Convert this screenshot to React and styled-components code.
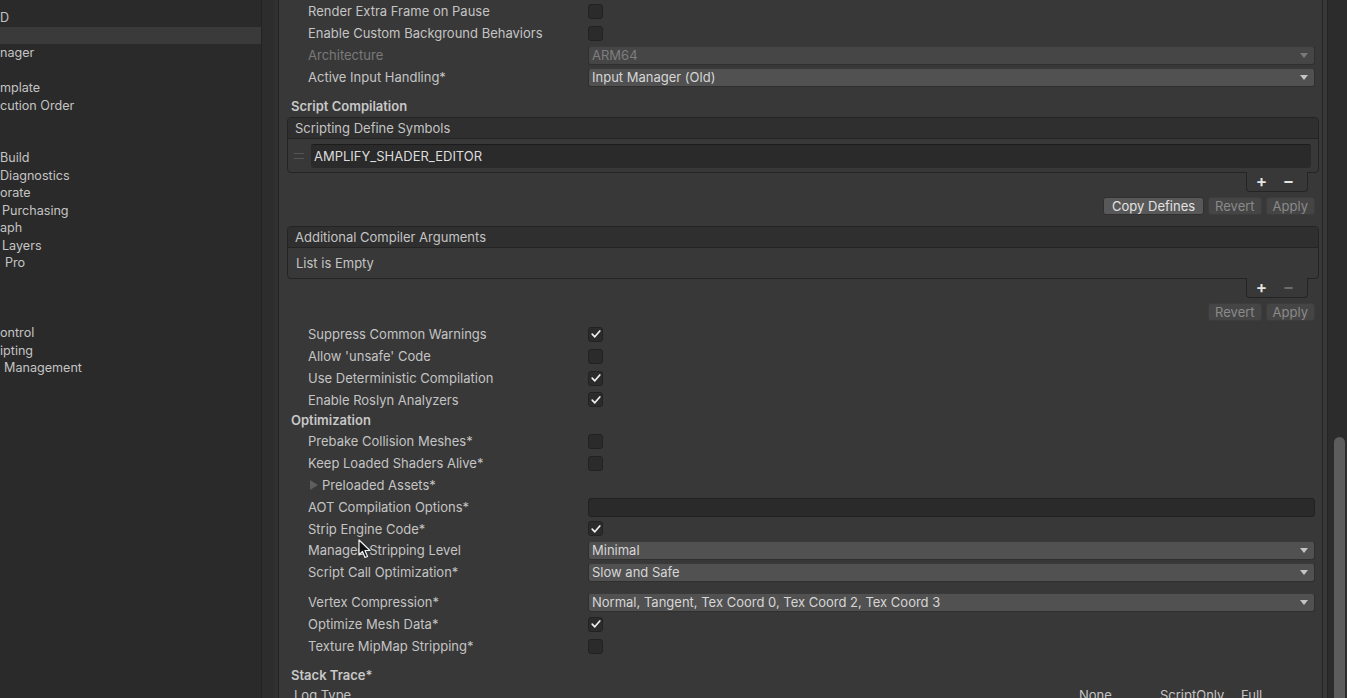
import styled, { createGlobalStyle } from "styled-components";

const GlobalStyle = createGlobalStyle`
    html, body {
        margin: 0;
        padding: 0;
        background: #383838;
        overflow: hidden;
    }
    body {
        font-family: Inter, "Noto Sans", "Liberation Sans", sans-serif;
        font-size: 13px;
        color: #c4c4c4;
    }
`;

const Window = styled.div`
    display: flex;
    width: 100vw;
    height: 698px;
    overflow: hidden;
`;

const Sidebar = styled.div`
    width: 261px;
    flex-shrink: 0;
    background: #2a2a2a;
    padding-top: 9px;
    display: flex;
    flex-direction: column;
`;

const SideItem = styled.div`
    height: 17.5px;
    line-height: 17.5px;
    font-size: 12.6px;
    padding-left: ${({ $indent }) => $indent || 0}px;
    white-space: pre;
    color: #c4c4c4;
    background: ${({ $selected }) => ($selected ? "#3a3a3a" : "transparent")};
`;

const Splitter = styled.div`
    width: 16px;
    flex-shrink: 0;
    background: #2d2d2d;
    border-left: 1px solid #232323;
    border-right: 1px solid #232323;
    box-shadow: inset -4px 0 0 #303030;
    margin-right: 4px;
`;

const Main = styled.div`
    flex: 1;
    position: relative;
    background: #383838;
    padding: 0 7px 0 8px;
    overflow: hidden;
`;

const ScrollArea = styled.div`
    width: 24px;
    flex-shrink: 0;
    display: flex;
    background: #383838;
    border-left: 1px solid #242424;
`;

const ScrollTrack = styled.div`
    flex: 1;
    margin-left: 4px;
    background: #2c2c2c;
    border-left: 1px solid #242424;
    padding-top: 437px;
    padding-left: 6px;
`;

const ScrollThumb = styled.div`
    width: 11px;
    height: 300px;
    border-radius: 6px;
    background: #5c5c5c;
`;

const Header = styled.div`
    height: 20px;
    line-height: 20px;
    margin-top: ${({ $top }) => $top || 0}px;
    font-weight: 600;
    font-size: 13px;
    color: #c8c8c8;
`;

const Row = styled.div`
    display: grid;
    grid-template-columns: 280px 1fr;
    align-items: center;
    height: ${({ $h }) => $h || 22}px;
    padding-left: 17px;
`;

const Label = styled.span`
    color: ${({ $disabled }) => ($disabled ? "#7a7a7a" : "#c4c4c4")};
    white-space: nowrap;
`;

const Foldout = styled.span`
    display: flex;
    align-items: center;
    gap: 4px;
    margin-left: 2px;
    color: #c4c4c4;
`;

const Triangle = styled.span`
    width: 0;
    height: 0;
    border-top: 5px solid transparent;
    border-bottom: 5px solid transparent;
    border-left: 8px solid #5e5e5e;
`;

const Checkbox = styled.div`
    width: 15px;
    height: 15px;
    box-sizing: border-box;
    border-radius: 3px;
    background: #2b2b2b;
    border: 1px solid #222;
    display: flex;
    align-items: center;
    justify-content: center;
`;

const Dropdown = styled.div`
    height: 19px;
    box-sizing: border-box;
    border-radius: 3px;
    background: ${({ $disabled }) => ($disabled ? "#464646" : "#515151")};
    border: 1px solid #2f2f2f;
    border-top-color: #3a3a3a;
    display: flex;
    align-items: center;
    justify-content: space-between;
    padding: 0 6px 0 3px;
    color: ${({ $disabled }) => ($disabled ? "#7e7e7e" : "#d6d6d6")};
`;

const Arrow = styled.span`
    width: 0;
    height: 0;
    border-left: 4px solid transparent;
    border-right: 4px solid transparent;
    border-top: 5px solid ${({ $disabled }) => ($disabled ? "#7a7a7a" : "#c4c4c4")};
`;

const TextField = styled.div`
    height: 19px;
    box-sizing: border-box;
    border-radius: 3px;
    background: #2a2a2a;
    border: 1px solid #212121;
`;

const ListSection = styled.div`
    margin: ${({ $top }) => $top || 0}px -4px 0;
`;

const ListBox = styled.div`
    border: 1px solid #242424;
    border-radius: 4px;
    overflow: hidden;
`;

const ListHeader = styled.div`
    height: 20px;
    line-height: 20px;
    padding-left: 7px;
    background: #2f2f2f;
    border-bottom: 1px solid #242424;
    color: #c4c4c4;
`;

const ListBody = styled.div`
    height: ${({ $h }) => $h}px;
    display: flex;
    align-items: center;
    padding: 0 7px 0 6px;
    gap: 7px;
`;

const EmptyText = styled.span`
    padding-left: 2px;
    color: #c4c4c4;
`;

const Handle = styled.span`
    width: 10px;
    height: 4px;
    border-top: 1px solid #555;
    border-bottom: 1px solid #555;
`;

const ItemField = styled.div`
    flex: 1;
    height: 23px;
    line-height: 23px;
    padding-left: 3px;
    border-radius: 3px;
    background: #2a2a2a;
    border-top: 1px solid #1c1c1c;
    color: #dcdcdc;
`;

const FooterRow = styled.div`
    display: flex;
    justify-content: flex-end;
    padding-right: 11px;
`;

const Footer = styled.div`
    width: 62px;
    height: 20px;
    box-sizing: border-box;
    margin-top: -1px;
    border: 1px solid #242424;
    border-top: none;
    border-radius: 0 0 4px 4px;
    background: #383838;
    display: flex;
    align-items: center;
    justify-content: space-around;
    padding: 0 5px 0 1px;
`;

const FooterBtn = styled.span`
    font-size: 17px;
    font-weight: 600;
    line-height: 1;
    color: ${({ $dim }) => ($dim ? "#6c6c6c" : "#e4e4e4")};
`;

const ButtonRow = styled.div`
    display: flex;
    justify-content: flex-end;
    gap: 4px;
    margin-top: 5px;
    padding-right: 4px;
`;

const Button = styled.div`
    height: 16px;
    line-height: 16px;
    padding: 0 ${({ $wide }) => ($wide ? 8 : 6)}px;
    border-radius: 3px;
    background: ${({ $disabled }) => ($disabled ? "#454545" : "#585858")};
    border: 1px solid ${({ $disabled }) => ($disabled ? "#3c3c3c" : "#303030")};
    color: ${({ $disabled }) => ($disabled ? "#8a8a8a" : "#e2e2e2")};
`;

const Spacer = styled.div`
    height: ${({ $h }) => $h}px;
`;

const LogRow = styled.div`
    display: grid;
    grid-template-columns: 1fr 81px 81px 74px;
    height: 20px;
    align-items: center;
    padding-left: 3px;
`;

const Cursor = styled.svg`
    position: absolute;
    left: 75px;
    top: 539px;
`;

const Check = () => (
    <svg width="12" height="12" viewBox="0 0 12 12">
        <path d="M2.2 6.2 L4.8 8.8 L9.8 3" fill="none" stroke="#f0f0f0" strokeWidth="1.7" strokeLinecap="round" strokeLinejoin="round" />
    </svg>
);

const CheckRow = ({ label, checked, h }) => (
    <Row $h={h}>
        <Label>{label}</Label>
        <Checkbox>{checked && <Check />}</Checkbox>
    </Row>
);

const DropRow = ({ label, value, disabled, h }) => (
    <Row $h={h}>
        <Label $disabled={disabled}>{label}</Label>
        <Dropdown $disabled={disabled}>
            <span>{value}</span>
            <Arrow $disabled={disabled} />
        </Dropdown>
    </Row>
);

const sideItems = [
    { t: "D" },
    { t: "", selected: true },
    { t: "nager" },
    { t: "" },
    { t: "mplate" },
    { t: "cution Order" },
    { t: "" },
    { t: "" },
    { t: "Build" },
    { t: "Diagnostics" },
    { t: "orate" },
    { t: "Purchasing", indent: 2 },
    { t: "aph" },
    { t: "Layers", indent: 2 },
    { t: "Pro", indent: 5 },
    { t: "" },
    { t: "" },
    { t: "" },
    { t: "ontrol" },
    { t: "ipting" },
    { t: "Management", indent: 4 },
];

const App = () => {
    return (
        <>
            <GlobalStyle />
            <Window>
                <Sidebar>
                    {sideItems.map((item, i) => (
                        <SideItem key={i} $selected={item.selected} $indent={item.indent}>
                            {item.t}
                        </SideItem>
                    ))}
                </Sidebar>
                <Splitter />
                <Main>
                    <CheckRow label="Render Extra Frame on Pause" />
                    <CheckRow label="Enable Custom Background Behaviors" />
                    <DropRow label="Architecture" value="ARM64" disabled />
                    <DropRow label="Active Input Handling*" value="Input Manager (Old)" />

                    <Header $top={8}>Script Compilation</Header>
                    <ListSection $top={1}>
                        <ListBox>
                            <ListHeader>Scripting Define Symbols</ListHeader>
                            <ListBody $h={33}>
                                <Handle />
                                <ItemField>AMPLIFY_SHADER_EDITOR</ItemField>
                            </ListBody>
                        </ListBox>
                        <FooterRow>
                            <Footer>
                                <FooterBtn>+</FooterBtn>
                                <FooterBtn>−</FooterBtn>
                            </Footer>
                        </FooterRow>
                        <ButtonRow>
                            <Button $wide>Copy Defines</Button>
                            <Button $disabled>Revert</Button>
                            <Button $disabled>Apply</Button>
                        </ButtonRow>
                    </ListSection>

                    <ListSection $top={11}>
                        <ListBox>
                            <ListHeader>Additional Compiler Arguments</ListHeader>
                            <ListBody $h={30}>
                                <EmptyText>List is Empty</EmptyText>
                            </ListBody>
                        </ListBox>
                        <FooterRow>
                            <Footer>
                                <FooterBtn>+</FooterBtn>
                                <FooterBtn $dim>−</FooterBtn>
                            </Footer>
                        </FooterRow>
                        <ButtonRow>
                            <Button $disabled>Revert</Button>
                            <Button $disabled>Apply</Button>
                        </ButtonRow>
                    </ListSection>

                    <Spacer $h={2} />
                    <CheckRow label="Suppress Common Warnings" checked />
                    <CheckRow label="Allow 'unsafe' Code" />
                    <CheckRow label="Use Deterministic Compilation" checked />
                    <CheckRow label="Enable Roslyn Analyzers" checked h={21} />

                    <Header>Optimization</Header>
                    <CheckRow label="Prebake Collision Meshes*" />
                    <CheckRow label="Keep Loaded Shaders Alive*" />
                    <Row>
                        <Foldout>
                            <Triangle />
                            Preloaded Assets*
                        </Foldout>
                    </Row>
                    <Row>
                        <Label>AOT Compilation Options*</Label>
                        <TextField />
                    </Row>
                    <CheckRow label="Strip Engine Code*" checked h={21} />
                    <DropRow label="Managed Stripping Level" value="Minimal" />
                    <DropRow label="Script Call Optimization*" value="Slow and Safe" />
                    <Spacer $h={8} />
                    <DropRow
                        label="Vertex Compression*"
                        value="Normal, Tangent, Tex Coord 0, Tex Coord 2, Tex Coord 3"
                    />
                    <CheckRow label="Optimize Mesh Data*" checked />
                    <CheckRow label="Texture MipMap Stripping*" />

                    <Header $top={8}>Stack Trace*</Header>
                    <LogRow>
                        <Label>Log Type</Label>
                        <Label>None</Label>
                        <Label>ScriptOnly</Label>
                        <Label>Full</Label>
                    </LogRow>

                    <Cursor width="14" height="20" viewBox="0 0 14 20">
                        <path d="M1 1 L1 16 L4.5 12.5 L7 18.5 L9.5 17.5 L7 11.5 L12 11.5 Z" fill="#111" stroke="#f2f2f2" strokeWidth="1.2" strokeLinejoin="round" />
                    </Cursor>
                </Main>
                <ScrollArea>
                    <ScrollTrack>
                        <ScrollThumb />
                    </ScrollTrack>
                </ScrollArea>
            </Window>
        </>
    );
};

export default App;
